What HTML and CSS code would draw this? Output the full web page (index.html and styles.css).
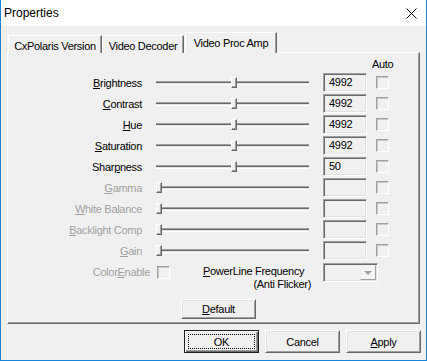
FILE: index.html
```html
<!DOCTYPE html>
<html>
<head>
  <meta charset="utf-8">
  <title>Properties</title>
  <link rel="stylesheet" href="styles.css">
</head>
<body>
  <div class="window">
    <div class="titlebar">
      <span class="title">Properties</span>
      <svg class="close" width="11" height="11" viewBox="0 0 11 11">
        <path d="M0.5 0.5 L10.5 10.5 M10.5 0.5 L0.5 10.5" stroke="#000" stroke-width="1" fill="none"/>
      </svg>
    </div>

    <div class="tabs">
      <div class="tab first">CxPolaris Version</div>
      <div class="tab">Video Decoder</div>
      <div class="tab selected">Video Proc Amp</div>
    </div>

    <div class="panel">
      <div class="grid">
        <div class="auto">Auto</div>

        <div class="label"><u>B</u>rightness</div>
        <div class="slider"><div class="track"></div><div class="thumb mid"></div></div>
        <div class="value">4992</div>
        <div class="check"></div>

        <div class="label"><u>C</u>ontrast</div>
        <div class="slider"><div class="track"></div><div class="thumb mid"></div></div>
        <div class="value">4992</div>
        <div class="check"></div>

        <div class="label"><u>H</u>ue</div>
        <div class="slider"><div class="track"></div><div class="thumb mid"></div></div>
        <div class="value">4992</div>
        <div class="check"></div>

        <div class="label"><u>S</u>aturation</div>
        <div class="slider"><div class="track"></div><div class="thumb mid"></div></div>
        <div class="value">4992</div>
        <div class="check"></div>

        <div class="label">Shar<u>p</u>ness</div>
        <div class="slider"><div class="track"></div><div class="thumb mid"></div></div>
        <div class="value">50</div>
        <div class="check"></div>

        <div class="label off"><u>G</u>amma</div>
        <div class="slider"><div class="track"></div><div class="thumb min"></div></div>
        <div class="value"></div>
        <div class="check"></div>

        <div class="label off"><u>W</u>hite Balance</div>
        <div class="slider"><div class="track"></div><div class="thumb min"></div></div>
        <div class="value"></div>
        <div class="check"></div>

        <div class="label off"><u>B</u>acklight Comp</div>
        <div class="slider"><div class="track"></div><div class="thumb min"></div></div>
        <div class="value"></div>
        <div class="check"></div>

        <div class="label off"><u>G</u>ain</div>
        <div class="slider"><div class="track"></div><div class="thumb min"></div></div>
        <div class="value"></div>
        <div class="check"></div>
      </div>

      <div class="extras">
        <div class="ce-label off">Color<u>E</u>nable</div>
        <div class="check ce-check"></div>
        <div class="powerline">
          <div><u>P</u>owerLine Frequency</div>
          <div class="right">(Anti Flicker)</div>
        </div>
        <div class="combo"><div class="drop"><span class="arrow"></span></div></div>
      </div>

      <div class="button default"><span><u>D</u>efault</span></div>
    </div>

    <div class="buttons">
      <div class="button ok">OK</div>
      <div class="button">Cancel</div>
      <div class="button"><span><u>A</u>pply</span></div>
    </div>
  </div>
</body>
</html>
```

FILE: styles.css
```css
body {
  margin: 0;
  font-family: "Liberation Sans", Arial, sans-serif;
  font-size: 11px;
  letter-spacing: -0.3px;
  color: #000;
}

.window {
  box-sizing: border-box;
  width: 427px;
  height: 361px;
  background: #f0f0f0;
  border: 1px solid #1883d7;
  border-top: none;
}

.titlebar {
  height: 26px;
  background: #fff;
  display: flex;
  align-items: center;
  justify-content: space-between;
  padding-left: 3px;
  padding-right: 9px;
}

.title {
  font-size: 12px;
  letter-spacing: 0;
}

/* tabs */
.tabs {
  display: flex;
  align-items: flex-end;
  height: 21px;
  margin: 6px 0 0 6px;
}

.tab {
  box-sizing: border-box;
  height: 18px;
  padding-top: 3px;
  line-height: 14px;
  text-align: center;
  background: #f0f0f0;
  border-top: 1px solid #fff;
  border-left: 1px solid #fff;
  border-right: 1px solid #696969;
  box-shadow: inset -1px 0 #a0a0a0;
  width: 82px;
}

.tab.first {
  width: 94px;
  margin-left: 1px;
}

.tab.selected {
  position: relative;
  z-index: 1;
  width: 92px;
  height: 21px;
  margin-left: 1px;
  padding-top: 3px;
}

/* page */
.panel {
  box-sizing: border-box;
  width: 413px;
  height: 272px;
  margin: -1px 0 0 6px;
  padding: 5px 0 0 12px;
  border: 1px solid;
  border-color: #fff #696969 #696969 #fff;
  box-shadow: inset -1px -1px #a0a0a0;
}

.grid {
  display: grid;
  grid-template-columns: 122px 13px 155px 13px 44px 9px 13px;
  grid-template-rows: 13px;
  grid-auto-rows: 19px;
  row-gap: 2px;
  align-items: center;
}

.auto {
  grid-column: 7;
  margin-left: -4px;
  white-space: nowrap;
  line-height: 13px;
}

.label {
  grid-column: 1;
  text-align: right;
  white-space: nowrap;
}

.off {
  color: #a0a0a0;
}

.slider {
  grid-column: 3;
  position: relative;
  height: 19px;
  display: flex;
  align-items: center;
}

.track {
  box-sizing: border-box;
  height: 4px;
  width: 153px;
  margin-left: 1px;
  background: #e3e3e3;
  border-top: 1px solid #a0a0a0;
  border-bottom: 1px solid #fff;
  box-shadow: inset 0 1px #696969;
}

.thumb {
  position: absolute;
  top: 4px;
  box-sizing: border-box;
  width: 6px;
  height: 11px;
  background: #f0f0f0;
  border: 1px solid;
  border-color: #fff #696969 #696969 #fff;
  box-shadow: inset -1px -1px #a0a0a0;
}

.thumb.mid {
  left: 76px;
}

.thumb.min {
  left: 1px;
}

.value {
  grid-column: 5;
  box-sizing: border-box;
  height: 19px;
  padding-left: 5px;
  line-height: 17px;
  border: 1px solid;
  border-color: #a0a0a0 #fff #fff #a0a0a0;
  box-shadow: inset 1px 1px #696969, inset -1px -1px #e3e3e3;
}

.check {
  grid-column: 7;
  box-sizing: border-box;
  width: 13px;
  height: 13px;
  border: 1px solid;
  border-color: #a0a0a0 #fff #fff #a0a0a0;
  box-shadow: inset 1px 1px #c8c8c8;
}

/* colour enable + powerline */
.extras {
  display: flex;
  align-items: flex-start;
  margin-top: 3px;
  height: 28px;
}

.ce-label {
  width: 130px;
  text-align: right;
  line-height: 19px;
  white-space: nowrap;
}

.ce-check {
  margin: 3px 0 0 7px;
}

.powerline {
  width: 108px;
  margin: 2px 0 0 33px;
  line-height: 13px;
  white-space: nowrap;
}

.right {
  text-align: right;
}

.combo {
  box-sizing: border-box;
  width: 55px;
  height: 19px;
  margin-left: 12px;
  padding-right: 1px;
  display: flex;
  align-items: center;
  justify-content: flex-end;
  border: 1px solid;
  border-color: #a0a0a0 #fff #fff #a0a0a0;
  box-shadow: inset 1px 1px #696969, inset -1px -1px #e3e3e3;
}

.drop {
  box-sizing: border-box;
  width: 16px;
  height: 15px;
  display: flex;
  align-items: center;
  justify-content: center;
  border: 1px solid;
  border-color: #f0f0f0 #a0a0a0 #a0a0a0 #f0f0f0;
  background: #f4f4f4;
}

.arrow {
  width: 0;
  height: 0;
  border-left: 4px solid transparent;
  border-right: 4px solid transparent;
  border-top: 4px solid #a0a0a0;
  margin-top: 1px;
}

/* buttons */
.button {
  box-sizing: border-box;
  width: 75px;
  height: 23px;
  display: flex;
  align-items: center;
  justify-content: center;
  background: #f0f0f0;
  border: 1px solid;
  border-color: #fff #696969 #696969 #fff;
  box-shadow: inset 1px 1px #e3e3e3, inset -1px -1px #a0a0a0;
}

.button.default {
  height: 20px;
  margin: 8px 0 0 161px;
}

.button.ok {
  border-color: #202020;
  box-shadow: inset 1px 1px #fff, inset -1px -1px #696969, inset -2px -2px #a0a0a0;
  outline: 1px dotted #000;
  outline-offset: -5px;
}

.buttons {
  display: flex;
  justify-content: flex-end;
  gap: 6px;
  margin-top: 6px;
  padding-right: 5px;
}
```
